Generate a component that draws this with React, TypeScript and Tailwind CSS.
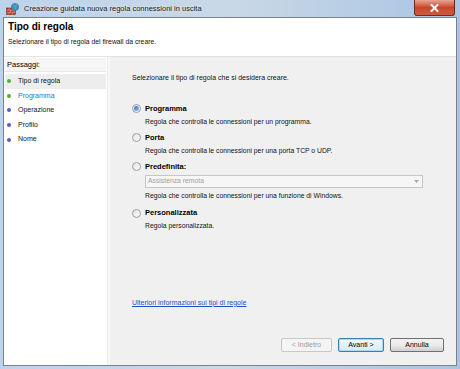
import React from 'react';

const steps = [
  { label: 'Tipo di regola', done: true, active: true },
  { label: 'Programma', done: true, current: true },
  { label: 'Operazione' },
  { label: 'Profilo' },
  { label: 'Nome' },
];

const Radio = ({ checked }: { checked?: boolean }) => (
  <span className="w-[9px] h-[9px] rounded-full border border-[#9a9ea5] bg-gradient-to-br from-[#e4e4e4] to-[#fbfbfb] flex items-center justify-center shrink-0">
    {checked && <span className="w-[5px] h-[5px] rounded-full bg-gradient-to-br from-[#2b6fc0] to-[#8fc3f0]" />}
  </span>
);

const Option = ({ title, desc, checked, children }: { title: string; desc: string; checked?: boolean; children?: React.ReactNode }) => (
  <div className="flex flex-col">
    <div className="flex items-center gap-[4px] h-[10px]">
      <Radio checked={checked} />
      <span className="font-bold text-[7.5px] text-black">{title}</span>
    </div>
    <div className="pl-[13px]">
      {children}
      <div className="text-[6.8px] text-[#111] mt-[3px]">{desc}</div>
    </div>
  </div>
);

const WinButton = ({ label, disabled, primary }: { label: string; disabled?: boolean; primary?: boolean }) => (
  <div
    className={`h-[14px] flex items-center justify-center rounded-[2px] text-[7px] border ${
      disabled
        ? 'border-[#c8c8c8] bg-[#f4f4f4] text-[#9a9a9a]'
        : primary
        ? 'border-[#3c7fb1] bg-gradient-to-b from-[#f0f8fd] to-[#d6ebf8] text-black shadow-[inset_0_0_0_1px_#a7d8f5]'
        : 'border-[#707070] bg-gradient-to-b from-[#f2f2f2] via-[#ebebeb] to-[#cfcfcf] text-black'
    }`}
  >
    {label}
  </div>
);

export default function App() {
  return (
    <div
      className="w-[460px] h-[369px] flex flex-col bg-gradient-to-r from-[#bcd3ec] via-[#c9d8e6] to-[#a9c5e3] overflow-hidden"
      style={{ fontFamily: '"Liberation Sans", Arial, sans-serif' }}
    >
      {/* Title bar */}
      <div className="h-[17px] flex items-center relative shrink-0">
        <svg width="13" height="12" viewBox="0 0 13 12" className="ml-[6px] mr-[5px]">
          <rect x="0.5" y="5" width="9" height="6.5" fill="#b3402a" stroke="#7a2416" strokeWidth="0.6" />
          <path d="M0.5 7.2h9M0.5 9.4h9M3 5v2.2M6.5 5v2.2M4.5 7.2v2.2M8 7.2v2.2M3 9.4v2.1M6.5 9.4v2.1" stroke="#e8b9a8" strokeWidth="0.5" />
          <circle cx="9" cy="4" r="3.6" fill="#3f8fd8" stroke="#1f5fa6" strokeWidth="0.5" />
          <path d="M7 2.5c1 .5 2 0 2.6 1.2.4.8-.6 1.4 0 2.3M10.5 1.2c.3.8-.4 1.4.6 1.8" stroke="#6fc24a" strokeWidth="0.9" fill="none" />
        </svg>
        <span className="text-[7.5px] text-[#1a1a1a] [text-shadow:0_0_4px_#ffffff]">Creazione guidata nuova regola connessioni in uscita</span>
        <div className="absolute right-[5px] top-0 w-[41px] h-[16px] rounded-b-[3px] border border-[#6d2a1d] border-t-0 bg-gradient-to-b from-[#e8a493] via-[#c8452c] to-[#d05a3c] flex items-center justify-center">
          <svg width="9" height="8" viewBox="0 0 9 8">
            <path d="M1.5 1l6 6M7.5 1l-6 6" stroke="#ffffff" strokeWidth="2" strokeLinecap="square" />
          </svg>
        </div>
      </div>

      {/* Client area */}
      <div className="flex-1 mx-[3px] mb-[3px] border border-[#7c8288] bg-white flex flex-col">
        <div className="h-[39px] shrink-0 pl-[4px] pt-[2px] border-b border-[#e3e3e3]">
          <div className="text-[10px] font-bold text-black leading-[14px]">Tipo di regola</div>
          <div className="text-[6.8px] text-[#111] mt-[3px]">Selezionare il tipo di regola del firewall da creare.</div>
        </div>

        <div className="flex-1 flex">
          {/* Steps */}
          <div className="w-[103px] shrink-0 bg-white flex flex-col pt-[1px]">
            <div className="h-[14px] mx-[1px] bg-[#f5f5f5] border-b border-[#e6e6e6] flex items-center pl-[2px] text-[7.5px] text-black">Passaggi:</div>
            <div className="flex flex-col mt-[2px]">
              {steps.map((s) => (
                <div
                  key={s.label}
                  className={`h-[14.6px] mx-[1px] flex items-center pl-[2px] gap-[7px] ${s.active ? 'bg-[#ededed]' : ''}`}
                >
                  <span className={`w-[4px] h-[4px] rounded-full ${s.done ? 'bg-[#47b531]' : 'bg-[#5a5cc8]'}`} />
                  <span className={`text-[7px] ${s.current ? 'text-[#2f6fc8]' : 'text-[#111]'}`}>{s.label}</span>
                </div>
              ))}
            </div>
          </div>
          <div className="w-[3px] bg-[#f7f7f7] border-l border-[#ececec]" />

          {/* Content */}
          <div className="flex-1 bg-[#f0f0f0] flex flex-col pl-[22px] pr-[12px]">
            <div className="text-[7px] text-[#111] mt-[16px]">Selezionare il tipo di regola che si desidera creare.</div>
            <div className="flex flex-col gap-[6px] mt-[20px]">
              <Option checked title="Programma" desc="Regola che controlla le connessioni per un programma." />
              <Option title="Porta" desc="Regola che controlla le connessioni per una porta TCP o UDP." />
              <Option title="Predefinita:" desc="Regola che controlla le connessioni per una funzione di Windows.">
                <div className="mt-[3px] w-[278px] h-[13px] border border-[#c6c6c6] bg-[#f6f6f6] flex items-center justify-between pl-[2px] pr-[3px]">
                  <span className="text-[6.8px] text-[#a0a0a0]">Assistenza remota</span>
                  <svg width="5" height="3" viewBox="0 0 5 3"><path d="M0 0h5L2.5 3z" fill="#a8a8a8" /></svg>
                </div>
              </Option>
              <div className="mt-[1px]">
                <Option title="Personalizzata" desc="Regola personalizzata." />
              </div>
            </div>
            <div className="flex-1" />
            <div className="text-[7px] text-[#1a55c8] underline mb-[30px]">Ulteriori informazioni sui tipi di regole</div>
            <div className="flex justify-end gap-[6px] mb-[13px]">
              <div className="w-[51px]"><WinButton disabled label="< Indietro" /></div>
              <div className="w-[46px]"><WinButton primary label="Avanti >" /></div>
              <div className="w-[54px]"><WinButton label="Annulla" /></div>
            </div>
          </div>
        </div>
      </div>
    </div>
  );
}
